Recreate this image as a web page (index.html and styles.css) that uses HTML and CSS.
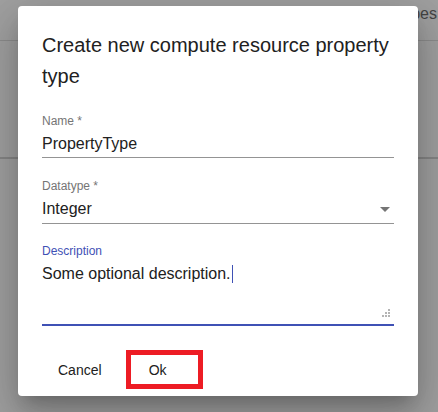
FILE: index.html
```html
<!DOCTYPE html>
<html>
<head>
<meta charset="utf-8">
<link rel="stylesheet" href="styles.css">
</head>
<body>
<div class="page">
  <header class="topbar"><span class="topbar-text">Property Types</span></header>
  <section class="band"></section>
</div>
<div class="dialog">
  <h2 class="dialog-title">Create new compute resource property type</h2>
  <div class="dialog-content">
    <div class="field field-name">
      <label class="field-label">Name *</label>
      <div class="field-input">PropertyType</div>
    </div>
    <div class="field field-type">
      <label class="field-label">Datatype *</label>
      <div class="field-input select">Integer
        <svg class="arrow" width="10" height="5" viewBox="0 0 10 5"><path d="M0 0l5 5 5-5z" fill="#757575"/></svg>
      </div>
    </div>
    <div class="field field-desc focused">
      <label class="field-label">Description</label>
      <div class="field-input textarea"><span>Some optional description.</span><span class="caret"></span>
        <svg class="grip" width="9" height="9" viewBox="0 0 9 9"><g fill="#b4b4b4"><rect x="6" y="0" width="2" height="2"/><rect x="3" y="3" width="2" height="2"/><rect x="6" y="3" width="2" height="2"/><rect x="0" y="6" width="2" height="2"/><rect x="3" y="6" width="2" height="2"/><rect x="6" y="6" width="2" height="2"/></g></svg>
      </div>
    </div>
  </div>
  <div class="dialog-actions">
    <button class="btn">Cancel</button>
    <button class="btn btn-ok">Ok</button>
  </div>
</div>
</body>
</html>
```
FILE: styles.css
```css
html, body {
  margin: 0;
  padding: 0;
}
body {
  width: 438px;
  height: 412px;
  overflow: hidden;
  background: #a0a0a0;
  font-family: "Liberation Sans", Arial, sans-serif;
  position: relative;
}
.page {
  display: flex;
  flex-direction: column;
}
.topbar {
  height: 41px;
  border-bottom: 1px solid #8c8c8c;
  box-sizing: border-box;
  display: flex;
  justify-content: flex-end;
  align-items: flex-start;
  padding-right: 1px;
}
.topbar-text {
  font-size: 16px;
  line-height: 18px;
  margin-top: 5px;
  color: #444;
}
.band {
  height: 118px;
  border-bottom: 2px solid #858585;
  box-sizing: border-box;
}
.dialog {
  position: absolute;
  left: 18px;
  top: 6px;
  width: 400px;
  height: 390px;
  background: #fff;
  border-radius: 4px;
  box-shadow: 0 11px 15px -7px rgba(0,0,0,0.2), 0 24px 38px 3px rgba(0,0,0,0.14), 0 9px 46px 8px rgba(0,0,0,0.12);
  display: flex;
  flex-direction: column;
  box-sizing: border-box;
}
.dialog-title {
  margin: 0;
  padding: 24px 24px 0;
  font-size: 20px;
  line-height: 31px;
  font-weight: normal;
  color: #212121;
}
.dialog-content {
  padding: 0 24px;
  display: flex;
  flex-direction: column;
}
.field {
  display: flex;
  flex-direction: column;
}
.field-name {
  margin-top: 23px;
}
.field-type {
  margin-top: 22px;
}
.field-desc {
  margin-top: 21px;
}
.field-label {
  font-size: 12px;
  line-height: 12px;
  color: #757575;
}
.field-input {
  margin-top: 7px;
  font-size: 16px;
  line-height: 19px;
  height: 19px;
  padding-bottom: 4px;
  border-bottom: 1px solid #949494;
  color: #212121;
  position: relative;
}
.field-type .field-input {
  margin-top: 7px;
  padding-bottom: 5px;
}
.select .arrow {
  position: absolute;
  right: 4px;
  top: 8px;
}
.focused .field-label {
  color: #3f51b5;
}
.textarea {
  height: 56px;
  border-bottom: 2px solid #3f51b5;
  padding-bottom: 4px;
}
.caret {
  display: inline-block;
  width: 1px;
  height: 18px;
  background: #3f51b5;
  vertical-align: -4px;
  margin-left: 1px;
}
.grip {
  position: absolute;
  right: 3px;
  bottom: 6px;
}
.dialog-actions {
  margin-top: auto;
  padding: 0 24px 8px;
  display: flex;
  gap: 8px;
}
.btn {
  font-family: "Liberation Sans", Arial, sans-serif;
  font-size: 14px;
  line-height: 24px;
  height: 36px;
  min-width: 64px;
  padding: 6px 16px;
  border: 0;
  background: transparent;
  color: #212121;
  box-sizing: border-box;
  position: relative;
}
.btn-ok::after {
  content: "";
  position: absolute;
  left: 0;
  top: -2px;
  width: 77px;
  height: 39px;
  border: 5px solid #ed1c24;
  box-sizing: border-box;
}
```
